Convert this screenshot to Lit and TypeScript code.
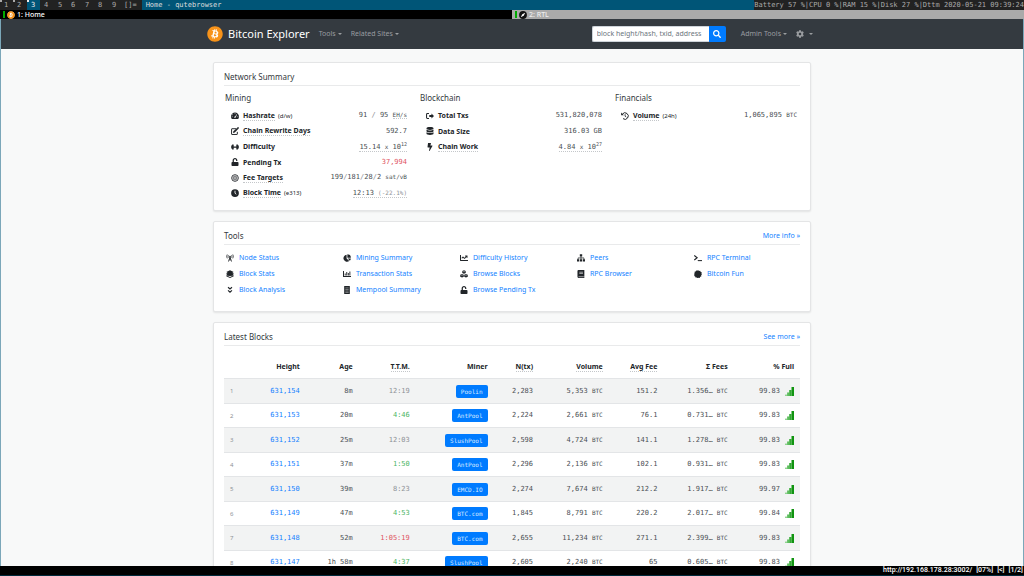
import { LitElement, html, css, svg } from "lit";
import { customElement, property } from "lit/decorators.js";

const ICONS: Record<string, unknown> = {
  search: svg`<path d="M505 442.7L405.3 343c-4.5-4.5-10.6-7-17-7H372c27.6-35.3 44-79.7 44-128C416 93.1 322.9 0 208 0S0 93.1 0 208s93.1 208 208 208c48.3 0 92.7-16.4 128-44v16.3c0 6.4 2.5 12.5 7 17l99.7 99.7c9.4 9.4 24.6 9.4 33.9 0l28.3-28.3c9.4-9.4 9.4-24.6.1-34zM208 336c-70.7 0-128-57.2-128-128 0-70.7 57.2-128 128-128 70.7 0 128 57.2 128 128 0 70.7-57.2 128-128 128z"/>`,
  cog: svg`<path d="M487.4 315.7l-42.6-24.6c4.3-23.2 4.3-47 0-70.2l42.6-24.6c4.9-2.8 7.1-8.6 5.5-14-11.1-35.6-30-67.8-54.7-94.6-3.8-4.1-10-5.1-14.8-2.3L380.8 110c-17.9-15.4-38.5-27.3-60.8-35.1V25.8c0-5.6-3.9-10.5-9.4-11.7-36.7-8.2-74.3-7.8-109.2 0-5.5 1.2-9.4 6.1-9.4 11.7V75c-22.2 7.9-42.8 19.8-60.8 35.1L88.7 85.5c-4.9-2.8-11-1.9-14.8 2.3-24.7 26.7-43.6 58.9-54.7 94.6-1.7 5.4.6 11.2 5.5 14L67.3 221c-4.3 23.2-4.3 47 0 70.2l-42.6 24.6c-4.9 2.8-7.1 8.6-5.5 14 11.1 35.6 30 67.8 54.7 94.6 3.8 4.1 10 5.1 14.8 2.3l42.6-24.6c17.9 15.4 38.5 27.3 60.8 35.1v49.2c0 5.6 3.9 10.5 9.4 11.7 36.7 8.2 74.3 7.8 109.2 0 5.5-1.2 9.4-6.1 9.4-11.7v-49.2c22.2-7.9 42.8-19.8 60.8-35.1l42.6 24.6c4.9 2.8 11 1.9 14.8-2.3 24.7-26.7 43.6-58.9 54.7-94.6 1.5-5.5-.7-11.3-5.6-14.1zM256 336c-44.1 0-80-35.9-80-80s35.9-80 80-80 80 35.9 80 80-35.9 80-80 80z"/>`,
  bitcoin: svg`<circle cx="256" cy="256" r="220" fill="#fff"/><path d="M504 256c0 136.967-111.033 248-248 248S8 392.967 8 256 119.033 8 256 8s248 111.033 248 248zm-141.651-35.33c4.937-32.999-20.191-50.739-54.55-62.573l11.146-44.702-27.213-6.781-10.851 43.524c-7.154-1.783-14.502-3.464-21.803-5.13l10.929-43.81-27.198-6.781-11.153 44.686c-5.922-1.349-11.735-2.682-17.377-4.084l.031-.14-37.53-9.37-7.239 29.062s20.191 4.627 19.765 4.913c11.022 2.751 13.014 10.044 12.68 15.825l-12.696 50.925c.76.194 1.744.473 2.829.907-.907-.225-1.876-.473-2.876-.713l-17.796 71.338c-1.349 3.348-4.767 8.37-12.471 6.464.271.395-19.78-4.937-19.78-4.937l-13.51 31.147 35.414 8.827c6.588 1.651 13.045 3.379 19.4 5.006l-11.262 45.213 27.182 6.781 11.153-44.733a1038.209 1038.209 0 0 0 21.687 5.627l-11.115 44.523 27.213 6.781 11.262-45.128c46.404 8.781 81.299 5.239 95.986-36.727 11.834-33.79-.589-53.281-25.004-65.991 17.78-4.098 31.174-15.792 34.747-39.949zm-62.177 87.179c-8.41 33.79-65.308 15.523-83.755 10.943l14.944-59.899c18.446 4.603 77.6 13.717 68.811 48.956zm8.417-87.667c-7.673 30.736-55.031 15.12-70.393 11.292l13.548-54.327c15.363 3.828 64.836 10.973 56.845 43.035z" fill="#f7931a"/>`,
  compass: svg`<circle cx="256" cy="256" r="250" fill="#111"/><path d="M400 110L300 300 110 400 210 210z" fill="#fff"/>`,
  gauge: svg`<path d="M256 36C115 36 0 151 0 292c0 52 16 101 43 142 5 8 14 12 24 12h378c10 0 19-4 24-12 27-41 43-90 43-142C512 151 397 36 256 36z"/><g fill="#fff"><circle cx="256" cy="106" r="30"/><circle cx="108" cy="174" r="30"/><circle cx="72" cy="304" r="30"/><circle cx="440" cy="304" r="30"/><path d="M348 136l34 14-74 184-52 50-50-40 20-50 44-14z"/></g>`,
  edit: svg`<path d="M330 110H60a24 24 0 0 0-24 24v320a24 24 0 0 0 24 24h320a24 24 0 0 0 24-24V310" fill="none" stroke="currentColor" stroke-width="62"/><path d="M400 40l76 76-236 240-110 20 18-104z"/><path d="M420 20c18-18 40-18 58 0l20 20c18 18 18 40 0 58l-20 20-78-78z"/>`,
  dumbbell: svg`<path d="M84 90h70q18 0 18 18v296q0 18-18 18H84q-18 0-18-18V108q0-18 18-18zM358 90h70q18 0 18 18v296q0 18-18 18h-70q-18 0-18-18V108q0-18 18-18zM0 220h512v72H0zM20 150h36v212H20zM456 150h36v212h-36zM172 216h168v80H172z"/>`,
  unlock: svg`<path transform="translate(32 0)" d="M400 256H152V152.9c0-39.6 31.7-72.5 71.3-72.9 40-.4 72.7 32.1 72.7 72v16c0 13.3 10.7 24 24 24h32c13.3 0 24-10.7 24-24v-16C376 68 307.5-.3 223.5 0 139.5.3 72 69.5 72 153.5V256H48c-26.5 0-48 21.5-48 48v160c0 26.5 21.5 48 48 48h352c26.5 0 48-21.5 48-48V304c0-26.5-21.5-48-48-48z"/>`,
  bullseye: svg`<circle cx="256" cy="256" r="214" fill="none" stroke="currentColor" stroke-width="56"/><circle cx="256" cy="256" r="120" fill="none" stroke="currentColor" stroke-width="44"/><circle cx="256" cy="256" r="48"/>`,
  clock: svg`<circle cx="256" cy="256" r="248"/><path d="M256 110v160l84 66" fill="none" stroke="#fff" stroke-width="54"/>`,
  signout: svg`<path d="M512 250L350 90v100H210v130h140v100z"/><path d="M190 100H90q-54 0-54 54v204q0 54 54 54h100" fill="none" stroke="currentColor" stroke-width="66"/>`,
  database: svg`<path transform="translate(32 0)" d="M448 73.143v45.714C448 159.143 347.667 192 224 192S0 159.143 0 118.857V73.143C0 32.857 100.333 0 224 0s224 32.857 224 73.143zM448 176v102.857C448 319.143 347.667 352 224 352S0 319.143 0 278.857V176c48.125 33.143 136.208 48.572 224 48.572S399.874 209.143 448 176zm0 160v102.857C448 479.143 347.667 512 224 512S0 479.143 0 438.857V336c48.125 33.143 136.208 48.572 224 48.572S399.874 369.143 448 336z"/>`,
  bolt: svg`<path transform="translate(96 0)" d="M296 160H180.6l42.6-129.8C227.2 15 215.7 0 200 0H56C44 0 33.8 8.9 32.2 20.8l-32 240C-1.7 275.2 9.5 288 24 288h118.7L96.6 482.5c-3.6 15.2 8 29.5 23.3 29.5 8.4 0 16.4-4.4 20.8-12l176-304c9.3-15.9-2.2-36-20.7-36z"/>`,
  history: svg`<path d="M92 130A208 208 0 1 1 130 425" fill="none" stroke="currentColor" stroke-width="64"/><path d="M8 30v176h178z"/><path d="M262 140v130l76 56" fill="none" stroke="currentColor" stroke-width="54"/>`,
  tower: svg`<path d="M256 190L160 480M256 190l96 290M200 370h112" fill="none" stroke="currentColor" stroke-width="56"/><circle cx="256" cy="160" r="54"/><path d="M80 30q-80 120 0 250M432 30q80 120 0 250M155 80q-40 76 0 150M357 80q40 76 0 150" fill="none" stroke="currentColor" stroke-width="48"/>`,
  layers: svg`<path d="M256 10l240 110-240 112L16 120zM16 210l240 106 240-106v60L256 382 16 270zM16 330l240 110 240-110v62L256 504 16 392z"/><path d="M70 150h372v220H70z"/>`,
  angles: svg`<path d="M130 80l126 114L382 80M130 280l126 114 126-114" fill="none" stroke="currentColor" stroke-width="76"/>`,
  pie: svg`<path d="M230 40v240l170 170A230 230 0 1 1 230 40z"/><path d="M280 10a222 222 0 0 1 222 222H280zM300 280h202a220 220 0 0 1-66 150z"/>`,
  bars: svg`<path d="M0 64h64v320h448v64H0zM110 230h60v120h-60zM210 120h60v230h-60zM310 190h60v160h-60zM410 96h60v254h-60z"/>`,
  receipt: svg`<path d="M76 0h360v512H76z"/><path d="M150 120h212M150 220h212M150 320h212M150 410h212" stroke="#fff" stroke-width="26"/>`,
  chart: svg`<path d="M496 384H64V80c0-8.84-7.16-16-16-16H16C7.16 64 0 71.16 0 80v336c0 17.67 14.33 32 32 32h464c8.84 0 16-7.16 16-16v-32c0-8.84-7.16-16-16-16zM464 96H345.94c-21.38 0-32.09 25.85-16.97 40.97l32.4 32.4L288 242.75l-73.37-73.37c-12.5-12.5-32.76-12.5-45.25 0l-68.69 68.69c-6.25 6.25-6.25 16.38 0 22.63l22.62 22.62c6.25 6.25 16.38 6.25 22.63 0L192 237.25l73.37 73.37c12.5 12.5 32.76 12.5 45.25 0l96-96 32.4 32.4c15.12 15.12 40.97 4.41 40.97-16.97V112c.01-8.84-7.15-16-15.99-16z"/>`,
  cubes: svg`<path d="M256 20l112 46v130l-112 50-112-50V66zM130 250l112 46v130l-112 54-116-54V296zM382 250l116 46v130l-116 54-112-54V296z"/><path d="M170 84l86 34 86-34M40 312l90 36 86-36M296 312l86 36 90-36" fill="none" stroke="#fff" stroke-width="26"/>`,
  sitemap: svg`<path d="M180 20h152v140H180zM0 340h140v140H0zM186 340h140v140H186zM372 340h140v140H372z"/><path d="M256 150v190M70 350V250h372v100" fill="none" stroke="currentColor" stroke-width="46"/>`,
  book: svg`<path d="M90 0h380v380q-20 50 0 90v42H90q-60-10-60-80V70Q36 6 90 0z"/><path d="M150 140h230M150 220h230M96 430h340" stroke="#fff" stroke-width="36"/>`,
  terminal: svg`<path d="M20 90l180 150L20 390" fill="none" stroke="currentColor" stroke-width="74"/><path d="M240 390h272v66H240z"/>`,
  burst: svg`<path d="M256 6l60 50 78-14 22 74 76 24-14 76 30 56-50 60 10 76-74 24-28 74-76-14-54 30-60-50-76 10-24-74-62-28 14-76L6 256l40-60-14-78 74-22 28-70 76 14z"/>`,
  level: svg`<path d="M0 430h120v82H0z" fill="#8fd28f"/><path d="M120 310h120v202H120z" fill="#5dbd5d"/><path d="M240 170h130v342H240z" fill="#33a933"/><path d="M370 0h142v512H370z" fill="#109410"/>`,
};

@customElement("fa-icon")
export class FaIcon extends LitElement {
  @property() name = "";
  static styles = css`
    :host { display: inline-flex; width: 8px; height: 8px; flex: none; }
    svg { width: 100%; height: 100%; display: block; fill: currentColor; }
  `;
  render() {
    return html`<svg viewBox="0 0 512 512" aria-hidden="true">${ICONS[this.name]}</svg>`;
  }
}

interface Stat { icon: string; label: string; hint?: boolean; note?: string; value: unknown; }

const u = (t: unknown) => html`<small>${t}</small>`;

const SUMMARY: { title: string; rows: Stat[] }[] = [
  {
    title: "Mining",
    rows: [
      { icon: "gauge", label: "Hashrate", hint: true, note: "(d/w)", value: html`91 <i>/</i> 95 <small class="hint">EH/s</small>` },
      { icon: "edit", label: "Chain Rewrite Days", hint: true, value: "592.7" },
      { icon: "dumbbell", label: "Difficulty", value: html`<span class="hint">15.14 ${u("x")} 10<sup>12</sup></span>` },
      { icon: "unlock", label: "Pending Tx", value: html`<span class="red">37,994</span>` },
      { icon: "bullseye", label: "Fee Targets", hint: true, value: html`199<i>/</i>181<i>/</i>28<i>/</i>2 ${u("sat/vB")}` },
      { icon: "clock", label: "Block Time", hint: true, note: "(e313)", value: html`<span class="hint">12:13 <small class="dim">(-22.1%)</small></span>` },
    ],
  },
  {
    title: "Blockchain",
    rows: [
      { icon: "signout", label: "Total Txs", value: "531,820,078" },
      { icon: "database", label: "Data Size", value: "316.03 GB" },
      { icon: "bolt", label: "Chain Work", hint: true, value: html`<span class="hint">4.84 ${u("x")} 10<sup>27</sup></span>` },
    ],
  },
  {
    title: "Financials",
    rows: [{ icon: "history", label: "Volume", hint: true, note: "(24h)", value: html`1,065,895 ${u("BTC")}` }],
  },
];

const TOOLS: [string, string][][] = [
  [["tower", "Node Status"], ["layers", "Block Stats"], ["angles", "Block Analysis"]],
  [["pie", "Mining Summary"], ["bars", "Transaction Stats"], ["receipt", "Mempool Summary"]],
  [["chart", "Difficulty History"], ["cubes", "Browse Blocks"], ["unlock", "Browse Pending Tx"]],
  [["sitemap", "Peers"], ["book", "RPC Browser"]],
  [["terminal", "RPC Terminal"], ["burst", "Bitcoin Fun"]],
];

const COLUMNS: [string, number, boolean][] = [
  ["", 4.3, false], ["Height", 9.9, false], ["Age", 9.2, false], ["T.T.M.", 9.9, true], ["Miner", 13.5, false],
  ["N(tx)", 7.9, true], ["Volume", 12.1, true], ["Avg Fee", 9.5, true], ["Σ Fees", 12.2, false], ["% Full", 11.5, false],
];

const BLOCKS: [string, string, string, string, string, string, string, string, string, string][] = [
  ["631,154", "8m", "12:19", "dim", "Poolin", "2,283", "5,353", "151.2", "1.356…", "99.83"],
  ["631,153", "20m", "4:46", "green", "AntPool", "2,224", "2,661", "76.1", "0.731…", "99.83"],
  ["631,152", "25m", "12:03", "dim", "SlushPool", "2,598", "4,724", "141.1", "1.278…", "99.83"],
  ["631,151", "37m", "1:50", "green", "AntPool", "2,296", "2,136", "102.1", "0.931…", "99.83"],
  ["631,150", "39m", "8:23", "dim", "EMCD.IO", "2,274", "7,674", "212.2", "1.917…", "99.97"],
  ["631,149", "47m", "4:53", "green", "BTC.com", "1,845", "8,791", "220.2", "2.017…", "99.84"],
  ["631,148", "52m", "1:05:19", "red", "BTC.com", "2,655", "11,234", "271.1", "2.399…", "99.83"],
  ["631,147", "1h 58m", "4:37", "green", "SlushPool", "2,605", "2,240", "65", "0.605…", "99.83"],
];

@customElement("app-root")
export class AppRoot extends LitElement {
  static styles = css`
    * { box-sizing: border-box; }
    :host {
      display: flex; flex-direction: column; height: 100vh; overflow: hidden;
      font: 8px/12px "Noto Sans", "Open Sans", sans-serif; color: #212529; background: #000;
    }
    a { color: #1482ff; text-decoration: none; }
    ul { list-style: none; margin: 0; padding: 0; }
    h2, h3 { margin: 0; font-weight: 400; color: #343a40; }

    .wm { display: flex; flex: none; height: 10px; background: #222; color: #aaa; font: 7px/10px "DejaVu Sans Mono", monospace; white-space: pre; }
    .tags { display: flex; }
    .tag { position: relative; width: 13px; padding-left: 4px; }
    .tag:nth-child(even) { width: 14px; }
    .tag.on { background: #057; color: #eee; }
    .tag.used::before { content: ""; position: absolute; left: 0; top: 0; width: 2px; height: 2px; background: currentColor; }
    .layout { padding: 0 5px 0 3px; }
    .title { flex: 1; background: #057; color: #ddd; padding-left: 4px; }

    .tabs { display: flex; flex: none; height: 9px; font-size: 7px; line-height: 9px; font-weight: 500; }
    .tab { flex: 1; display: flex; align-items: center; gap: 2px; padding-left: 3px; background: #000; color: #fff; }
    .tab + .tab { background: #aaa; color: #eee; }
    .tab::before { content: ""; width: 2px; height: 7px; background: #0a0; }

    .view { flex: 1; min-height: 0; overflow: hidden; background: #f8f9f9; border: solid #7ba7b9; border-width: 0 1px; }
    .navbar { background: #343a40; padding: 7px 0; }
    .bar { display: flex; align-items: center; max-width: 610px; height: 16px; margin: 0 auto; padding-right: 4px; font-size: 7px; }
    .brand { display: flex; align-items: center; gap: 5px; color: #fff; font-size: 11px; margin-right: 9px; white-space: nowrap; }
    .brand fa-icon { width: 16px; height: 16px; }
    .menu {
      display: flex; align-items: center; gap: 2px; border: 0; background: none; padding: 0; margin-right: 9px;
      font: inherit; color: #9a9da0; white-space: nowrap;
    }
    .menu:last-child { margin: 0; gap: 5px; }
    .menu::after { content: ""; border: 2px solid transparent; border-top-color: currentColor; border-bottom: 0; }
    .search { display: flex; width: 134px; height: 16px; margin: 0 15px 0 auto; }
    .search input {
      flex: 1; min-width: 0; border: 1px solid #ced4da; border-right: 0; border-radius: 2px 0 0 2px; padding: 0 2px 0 4px;
      font: inherit; background: #fff;
    }
    .search input::placeholder { color: #6c757d; opacity: 1; }
    .search button {
      width: 17px; display: grid; place-items: center; border: 0; padding: 0; border-radius: 0 2px 2px 0;
      background: #007bff; color: #fff;
    }

    main { display: flex; flex-direction: column; gap: 10px; max-width: 598px; margin: 13px auto 0; }
    .card { background: #fff; border: 1px solid #e4e5e6; border-radius: 2px; box-shadow: 0 1px 2px rgba(0, 0, 0, 0.09); padding: 8px 10px 9px; }
    .head { display: flex; justify-content: space-between; align-items: center; border-bottom: 1px solid #e9eaeb; padding-bottom: 2px; }
    .head h2 { font-size: 8px; line-height: 12px; }

    .summary { display: grid; grid-template-columns: repeat(3, 1fr); column-gap: 13px; padding: 6px 3px 0 1px; }
    .summary h3 { font-size: 8px; line-height: 12px; margin-bottom: 4px; }
    .stat { display: flex; align-items: center; height: 15px; padding-left: 6px; white-space: nowrap; }
    .stat:nth-child(even) { height: 16px; }
    .stat b { margin: 0 3px 0 4px; font-size: 7px; line-height: 9px; }
    .note { font-size: 6px; }
    .num { font-family: "DejaVu Sans Mono", monospace; font-size: 7px; line-height: 9px; color: #4a4f54; }
    .stat .num { margin-left: auto; }
    .num small, .num sup { font-size: 6px; line-height: 6px; }
    .num sup { font-size: 5px; vertical-align: 3px; }
    .num i { font-style: normal; color: #8d9196; }
    .hint { border-bottom: 1px dotted #c4c7ca; }
    .red { color: #e0535f; }
    .green { color: #4bb563; }
    .dim { color: #8d9196; }

    .tools { display: grid; grid-template-columns: repeat(5, 1fr); margin-right: -11px; padding: 5px 0 4px 2px; }
    .tools li { display: flex; align-items: center; gap: 5px; height: 16px; font-size: 7px; white-space: nowrap; }
    .more { font-size: 7px; }

    table { width: 100%; border-spacing: 0; table-layout: fixed; margin-top: 8px; }
    th, td { padding: 0 6px; text-align: right; white-space: nowrap; }
    th { height: 24px; font-size: 7px; line-height: 9px; }
    td { height: 24px; border-top: 1px solid #e3e5e7; }
    tr:nth-child(odd) td { height: 25px; background: #f2f3f3; }
    td.idx { font-size: 6px; text-align: left; color: #8d9196; }
    .miner {
      display: inline-block; padding: 0 5px; border-radius: 2px; background: #007bff; color: #d8eaff;
      font-size: 6px; line-height: 13px;
    }
    .full { display: inline-flex; align-items: center; gap: 5px; }
    .full fa-icon { width: 9px; height: 9px; }

    .status {
      flex: none; display: flex; justify-content: flex-end; gap: 4px; height: 10px; padding-right: 1px;
      background: #000; color: #fff; border-bottom: 1px solid #012a3b;
      font: 500 7px/9px Roboto, "Noto Sans", sans-serif;
    }
  `;

  private card(title: string, body: unknown, more = "") {
    return html`<section class="card">
      <div class="head"><h2>${title}</h2>${more ? html`<a class="more" href="#">${more}</a>` : ""}</div>
      ${body}
    </section>`;
  }

  render() {
    return html`
      <header class="wm">
        <div class="tags">${[1, 2, 3, 4, 5, 6, 7, 8, 9].map(
          (n) => html`<span class="tag ${n < 4 ? "used" : ""} ${n === 3 ? "on" : ""}">${n}</span>`)}</div>
        <span class="layout">[]=</span><span class="title">Home - qutebrowser</span>
        <span>Battery 57 %|CPU 0 %|RAM 15 %|Disk 27 %|Dttm 2020-05-21 09:39:24</span>
      </header>
      <div class="tabs">
        <div class="tab"><fa-icon name="bitcoin"></fa-icon>1: Home</div>
        <div class="tab"><fa-icon name="compass"></fa-icon>2: RTL</div>
      </div>
      <div class="view">
        <nav class="navbar">
          <div class="bar">
            <a class="brand" href="#"><fa-icon name="bitcoin"></fa-icon>Bitcoin Explorer</a>
            <button class="menu">Tools</button>
            <button class="menu">Related Sites</button>
            <form class="search">
              <input aria-label="Search" placeholder="block height/hash, txid, address" />
              <button type="button" aria-label="Search"><fa-icon name="search"></fa-icon></button>
            </form>
            <button class="menu">Admin Tools</button>
            <button class="menu" aria-label="Settings"><fa-icon name="cog"></fa-icon></button>
          </div>
        </nav>
        <main>
          ${this.card("Network Summary", html`<div class="summary">${SUMMARY.map((g) => html`
            <div><h3>${g.title}</h3><ul>${g.rows.map((r) => html`
              <li class="stat"><fa-icon name=${r.icon}></fa-icon><b class=${r.hint ? "hint" : ""}>${r.label}</b>
                <span class="note">${r.note ?? ""}</span><span class="num">${r.value}</span></li>`)}</ul></div>`)}</div>`)}
          ${this.card("Tools", html`<div class="tools">${TOOLS.map((col) => html`<ul>${col.map(([icon, label]) => html`
            <li><fa-icon name=${icon}></fa-icon><a href="#">${label}</a></li>`)}</ul>`)}</div>`, "More info »")}
          ${this.card("Latest Blocks", html`<table>
            <colgroup>${COLUMNS.map(([, w]) => html`<col style="width:${w}%" />`)}</colgroup>
            <thead><tr>${COLUMNS.map(([t, , hint]) => html`<th><span class=${hint ? "hint" : ""}>${t}</span></th>`)}</tr></thead>
            <tbody>${BLOCKS.map(([height, age, ttm, tone, miner, n, vol, avg, fees, full], i) => html`<tr>
              <td class="idx">${i + 1}</td>
              <td class="num"><a href="#">${height}</a></td>
              <td class="num">${age}</td>
              <td class="num"><span class=${tone}>${ttm}</span></td>
              <td class="num"><span class="miner">${miner}</span></td>
              <td class="num">${n}</td>
              <td class="num">${vol} ${u("BTC")}</td>
              <td class="num">${avg}</td>
              <td class="num">${fees} ${u("BTC")}</td>
              <td class="num"><span class="full">${full}<fa-icon name="level"></fa-icon></span></td>
            </tr>`)}</tbody></table>`, "See more »")}
        </main>
      </div>
      <footer class="status"><span>http://192.168.178.28:3002/</span><span>[07%]</span><span>[&lt;]</span><span>[1/2]</span></footer>
    `;
  }
}
